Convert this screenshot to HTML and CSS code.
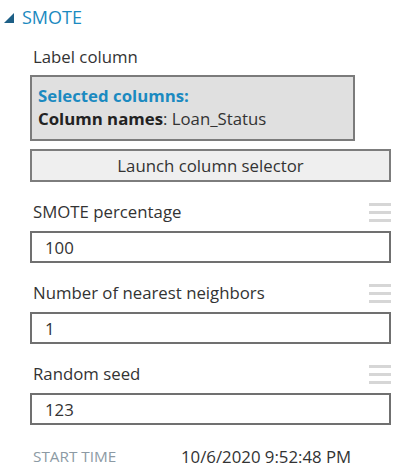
FILE: index.html
```html
<!DOCTYPE html>
<html>
<head>
<meta charset="utf-8">
<link rel="stylesheet" href="styles.css">
</head>
<body>
<div class="panel">
  <div class="section-head">
    <svg class="caret" width="10" height="10" viewBox="0 0 10 10"><polygon points="10,0 10,10 0,10" fill="#1d5f86"/></svg>
    <span class="section-title">SMOTE</span>
  </div>
  <div class="content">
    <div class="label first">Label column</div>
    <div class="selected-box">
      <div class="sel-title">Selected columns:</div>
      <div class="sel-names"><b>Column names</b>: Loan_Status</div>
    </div>
    <div class="launch-btn">Launch column selector</div>

    <div class="field">
      <div class="label-row"><span class="label">SMOTE percentage</span><span class="grip"><i></i><i></i><i></i></span></div>
      <div class="input">100</div>
    </div>
    <div class="field">
      <div class="label-row"><span class="label">Number of nearest neighbors</span><span class="grip"><i></i><i></i><i></i></span></div>
      <div class="input">1</div>
    </div>
    <div class="field">
      <div class="label-row"><span class="label">Random seed</span><span class="grip"><i></i><i></i><i></i></span></div>
      <div class="input">123</div>
    </div>
    <div class="meta">
      <span class="meta-key">START TIME</span>
      <span class="meta-val">10/6/2020 9:52:48 PM</span>
    </div>
  </div>
</div>
</body>
</html>
```

FILE: styles.css
```css
html, body {
  margin: 0;
  padding: 0;
  background: #ffffff;
}
body {
  font-family: "Open Sans", "Noto Sans", sans-serif;
  font-size: 16.8px;
  color: #333333;
}
.panel {
  width: 404px;
  height: 474px;
  overflow: hidden;
}
.section-head {
  display: flex;
  align-items: center;
  height: 34px;
  padding-left: 4px;
}
.caret {
  margin-right: 8px;
  margin-top: 1px;
}
.section-title {
  font-size: 18px;
  color: #1b8ac0;
  line-height: 20px;
}
.content {
  padding-left: 30px;
  width: 361px;
  display: flex;
  flex-direction: column;
}
.label {
  line-height: 22px;
  color: #333333;
  padding-left: 3px;
}
.first {
  margin-top: 12px;
}
.selected-box {
  margin-top: 7px;
  width: 325px;
  height: 66px;
  box-sizing: border-box;
  border: 2px solid #7b7b7b;
  background: #e0e0e0;
  padding: 7px 6px 0;
}
.sel-title {
  color: #1b8ac0;
  font-weight: 700;
  line-height: 23px;
}
.sel-names {
  line-height: 23px;
  color: #333333;
}
.sel-names b {
  color: #222222;
}
.launch-btn {
  margin-top: 8px;
  height: 33px;
  box-sizing: border-box;
  border: 2px solid #7d7d7d;
  background: #efefef;
  display: flex;
  align-items: center;
  justify-content: center;
  color: #333333;
}
.field {
  margin-top: 18px;
  display: flex;
  flex-direction: column;
}
.label-row {
  display: flex;
  justify-content: space-between;
  align-items: center;
  height: 24px;
}
.grip {
  display: flex;
  flex-direction: column;
  gap: 5px;
  width: 22px;
}
.grip i {
  display: block;
  height: 3px;
  background: #d6d6d6;
}
.input {
  margin-top: 7px;
  height: 32px;
  box-sizing: border-box;
  border: 2px solid #707070;
  background: #ffffff;
  padding-left: 13px;
  display: flex;
  align-items: center;
  color: #333333;
}
.meta {
  margin-top: 19px;
  display: flex;
  align-items: center;
  height: 24px;
  padding-left: 3px;
}
.meta-key {
  width: 148px;
  color: #8c9aa4;
  font-size: 15.3px;
}
.meta-val {
  color: #333333;
}
```
